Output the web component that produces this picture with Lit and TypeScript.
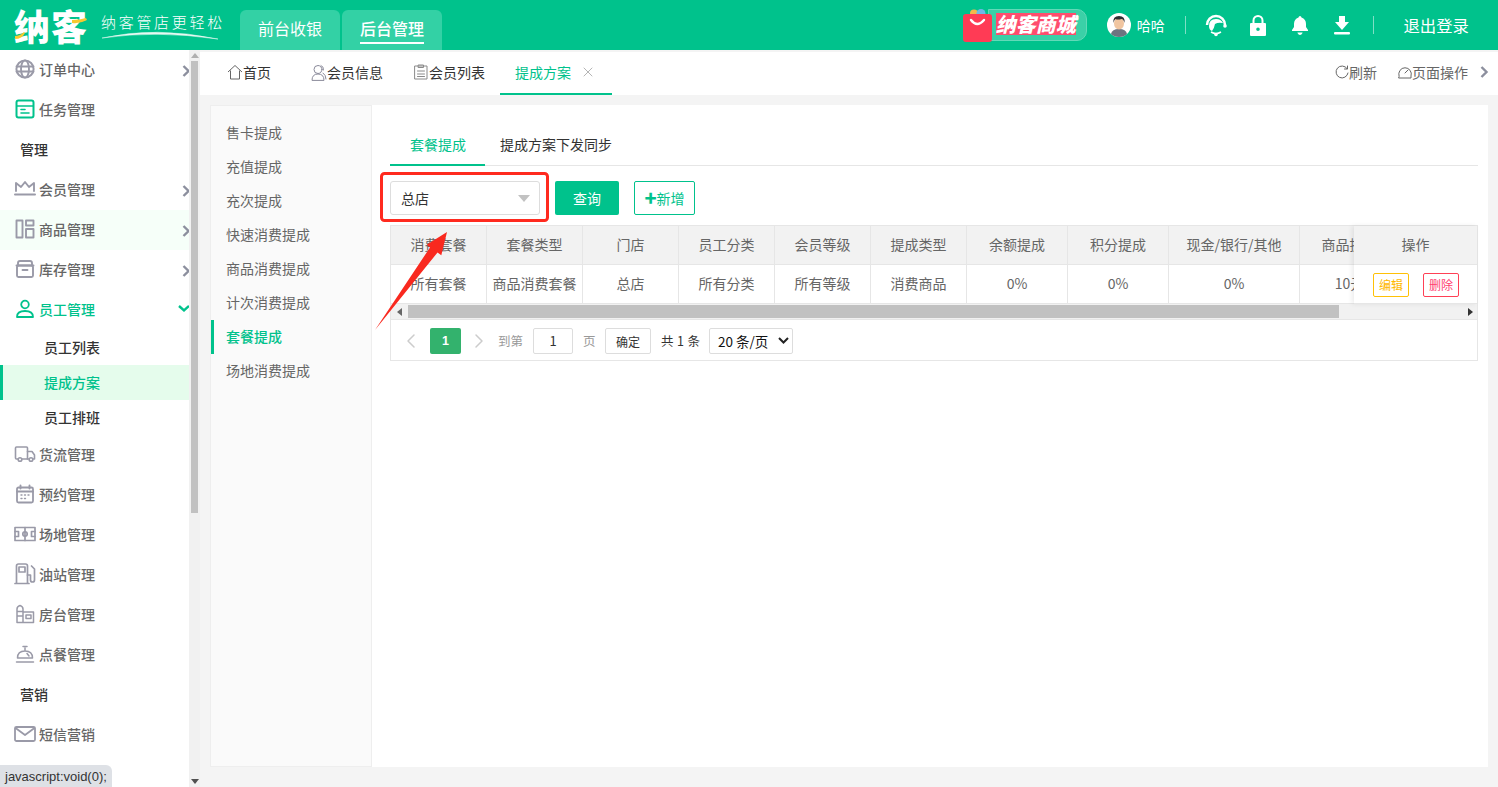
import { LitElement, html, css, svg, nothing } from "lit";
import { customElement } from "lit/decorators.js";

const S = (w: number, h: number, body: unknown, color = "#9a9aa8", sw = 1.9) => html`<svg width=${w} height=${h} viewBox="0 0 ${w} ${h}" fill="none" stroke=${color} stroke-width=${sw} stroke-linecap="round" stroke-linejoin="round">${body}</svg>`;

const G = "#00c28c";
const GC = css`#00c28c`;
const icons: Record<string, unknown> = {
  globe: S(20, 20, svg`<circle cx="10" cy="10" r="8.6" stroke-width="2"/><ellipse cx="10" cy="10" rx="4" ry="8.6"/><path d="M1.5 7.5h17M1.5 12.5h17"/>`),
  task: S(20, 20, svg`<rect x="1.5" y="1.5" width="17" height="17" rx="2" stroke-width="2"/><path d="M2 7h16M6 10.5h4M6 14h8" stroke-width="1.6"/>`, G),
  crown: S(22, 20, svg`<path d="M2 12V4l5 4 4-5 4 5 5-4v8" /><path d="M1 15.500h20" stroke-width="2"/>`),
  goods: S(20, 20, svg`<rect x="1.500" y="1.500" width="6" height="17"/><rect x="11" y="1.500" width="7.500" height="5"/><rect x="11" y="10" width="7.500" height="8.500"/>`),
  box: S(20, 20, svg`<path d="M3 6.500V4q0-2 2-2h10q2 0 2 2v2.500"/><path d="M1.500 6.500h17"/><rect x="2" y="6.500" width="16" height="11.500" rx="1.500"/><path d="M7.500 11h5"/>`),
  user: S(20, 20, svg`<circle cx="10" cy="5.500" r="3.800" stroke-width="1.800"/><path d="M2 18q0-6 8-6t8 6z" stroke-width="1.800"/>`, G),
  truck: S(22, 20, svg`<path d="M4 15H2.500q-1 0-1-1V4q0-1 1-1h10q1 0 1 1v11H8"/><path d="M13.500 7.500H18l2.500 3.500v4H19"/><path d="M13.500 15H15"/><circle cx="6" cy="15.500" r="1.800"/><circle cx="17" cy="15.500" r="1.800"/>`, "#9a9aa8", 1.6),
  cal: S(20, 20, svg`<rect x="2" y="3.500" width="16" height="15" rx="1.500" stroke-width="1.800"/><path d="M2 7.500h16M5.500 1.500v3M14.500 1.500v3"/><path d="M6 11h1M9.500 11h1M13 11h1M6 14.500h1M9.500 14.500h1" stroke-width="1.400"/>`),
  field: S(22, 16, svg`<rect x="1" y="1.500" width="20" height="13"/><path d="M1 5.500h3.500v5H1M21 5.500h-3.500v5H21M11 1.500v13"/><circle cx="11" cy="8" r="2.200"/>`, "#9a9aa8", 1.7),
  fuel: S(22, 22, svg`<path d="M2.500 20V3q0-2 2-2h7q2 0 2 2v17M1 20.500h14"/><rect x="5" y="4" width="6" height="5"/><path d="M13.500 12h3v5q0 2 2 2t2-2V6l-3-3"/>`, "#9a9aa8", 1.7),
  room: S(20, 20, svg`<path d="M2 18.500V5q0-2.500 3-3.500 3 1 3 3.500v13.500zM2 7.500h6M2 12h6M8 8h10.500v10.500H8"/><rect x="11" y="11" width="5" height="3.500"/>`, "#9a9aa8", 1.5),
  bell2: S(20, 20, svg`<path d="M2.500 14q0-7 7.500-7t7.500 7zM10 7V4M8 2.500h4M1.500 18h17" /><path d="M12 9.500l2 2.500"/>`, "#9a9aa8", 1.5),
  mail: S(22, 18, svg`<rect x="1" y="2" width="20" height="14" rx="1.500" stroke-width="1.800"/><path d="M1.500 3l9.500 7 9.500-7" stroke-width="1.800"/>`),
};

const chevron = html`<svg class="chev" width="9" height="14" viewBox="0 0 9 14" fill="none" stroke="#8c8f9e" stroke-width="2.400"><path d="M1.500 2l5 5-5 5"/></svg>`;
const chevDown = html`<svg class="chev" width="12" height="9" viewBox="0 0 12 9" fill="none" stroke="${G}" stroke-width="2.400"><path d="M1 2l5 4.500L11 2"/></svg>`;

type Item = { t: string; i?: string; c?: boolean; kind?: string };
const menu: Item[] = [
  { t: "订单中心", i: "globe", c: true },
  { t: "任务管理", i: "task" },
  { t: "管理", kind: "head" },
  { t: "会员管理", i: "crown", c: true },
  { t: "商品管理", i: "goods", c: true, kind: "hover" },
  { t: "库存管理", i: "box", c: true },
  { t: "员工管理", i: "user", kind: "open" },
  { t: "员工列表", kind: "sub" },
  { t: "提成方案", kind: "sub on" },
  { t: "员工排班", kind: "sub" },
  { t: "货流管理", i: "truck" },
  { t: "预约管理", i: "cal" },
  { t: "场地管理", i: "field" },
  { t: "油站管理", i: "fuel" },
  { t: "房台管理", i: "room" },
  { t: "点餐管理", i: "bell2" },
  { t: "营销", kind: "head" },
  { t: "短信营销", i: "mail" },
];

const side = ["售卡提成", "充值提成", "充次提成", "快速消费提成", "商品消费提成", "计次消费提成", "套餐提成", "场地消费提成"];
const cols: [string, string, number][] = [
  ["消费套餐", "所有套餐", 96], ["套餐类型", "商品消费套餐", 96], ["门店", "总店", 96], ["员工分类", "所有分类", 96],
  ["会员等级", "所有等级", 96], ["提成类型", "消费商品", 96], ["余额提成", "0%", 101], ["积分提成", "0%", 101],
  ["现金/银行/其他", "0%", 131], ["商品提成", "10元", 100],
];

@customElement("app-root")
export class AppRoot extends LitElement {
  static styles = css`
    :host { display: block; width: 100vw; height: 100vh; overflow: hidden; position: relative; background: #f4f4f4;
      font-family: "Noto Sans CJK SC", "Liberation Sans", sans-serif; font-size: 14px; color: #333; }
    * { box-sizing: border-box; }
    svg { display: block; flex: none; }
    .top { height: 50px; background: ${GC}; display: flex; color: #fff; }
    .brand { width: 240px; display: flex; align-items: center; padding-left: 14px; flex: none; }
    .logo { font-size: 36px; font-weight: 900; letter-spacing: 1px; line-height: 1; width: 74px; white-space: nowrap; position: relative; }
    .accent { position: absolute; left: 0; top: 0; }
    .slogan { margin-left: 13px; position: relative; font-size: 15px; font-weight: 300; letter-spacing: 2.700px; line-height: 20px; white-space: nowrap; height: 34px; padding-top: 4px; }
    .swoosh { position: absolute; left: 0; top: 20px; }
    .navtab { width: 100px; height: 40px; margin: 10px 2px 0 0; background: #33d1a5; border-radius: 6px 6px 0 0; display: flex; justify-content: center; align-items: center; font-size: 16px; }
    .navtab span { display: block; line-height: 28px; height: 30px; margin-top: -2px; }
    .navtab.on span { border-bottom: 2px solid #fff; font-weight: 500; }
    .topright { margin-left: auto; display: flex; align-items: center; padding-right: 29px; }
    .shop { display: flex; align-items: center; width: 124px; height: 34px; position: relative; margin-right: 20px; }
    .pill { position: absolute; left: 25px; right: 0; top: 1px; height: 32px; border-radius: 0 10px 10px 0; background: #3bd0a7; border: 1px solid #62d9b8; }
    .bag { position: absolute; left: 0; top: 1px; }
    .shoptext { position: absolute; left: 33px; top: 5px; font-size: 20px; line-height: 24px; font-weight: 900; font-style: italic; color: #fff; background: #ff4d6d; white-space: nowrap; letter-spacing: 0; padding: 0; height: 22px; display: flex; align-items: center; }
    .who { font-size: 14px; margin-left: 6px; width: 29px; }
    .vsep { width: 1px; height: 18px; background: #7fdfc5; }
    .ti { width: 42px; display: flex; justify-content: center; }
    .logout { font-size: 16.400px; margin-left: 29.600px; }
    .body { display: flex; height: 737px; }
    .sidebar { width: 189px; flex: none; background: #fff; overflow: hidden; }
    .mi { height: 40px; display: flex; align-items: center; position: relative; padding: 0 0 2px 15px; color: #666; font-weight: 500; }
    .mi .ic { width: 20px; display: flex; justify-content: center; margin-right: 4px; }
    .mi .tx { line-height: 20px; }
    .mi .chev { position: absolute; right: -2px; top: 14px; }
    .mi.hover { background: #f6fff9; }
    .mi.open { color: ${GC}; }
    .mi.open .chev { top: 14px; right: -1px; }
    .mi.head { color: #333; padding-left: 20px; }
    .mi.sub { height: 35px; padding-left: 44px; color: #333; }
    .mi.sub.on { background: #e5fcec; color: ${GC}; border-left: 3px solid ${GC}; padding-left: 41px; }
    .sb { width: 11px; flex: none; background: #f1f1f1; display: flex; flex-direction: column; align-items: center; }
    .sb .arr { height: 11px; flex: none; display: flex; align-items: center; justify-content: center; }
    .sb .thumb { width: 7px; height: 452px; background: #c1c1c1; flex: none; }
    .sb .sp { flex: 1; }
    .main { flex: 1; min-width: 0; display: flex; flex-direction: column; }
    .tabs { margin-top: 2px; height: 43px; background: #fff; display: flex; align-items: center; padding: 0 0 3px 27px; flex: none; }
    .tab { display: flex; align-items: center; color: #333; line-height: 20px; }
    .tab.t2 { margin-left: 40px; }
    .tab.t3 { margin-left: 31px; }
    .tab.t3 svg { margin-right: 1px; }
    .tab.cur { margin-left: 15px; width: 112px; height: 43px; padding: 0 0 2px 15px; color: ${GC}; border-bottom: 2px solid ${GC}; align-self: flex-start; }
    .tab.cur .x { margin-left: 12px; }
    .tabr { margin-left: auto; display: flex; align-items: center; color: #666; }
    .tabr .a { display: flex; align-items: center; }
    .tabr .b { display: flex; align-items: center; margin-left: 21px; }
    .tabr .chev { margin: 0 9px 0 12px; }
    .content { flex: 1; margin: 10px 10px 20px; display: flex; background: #fff; min-height: 0; }
    .left { width: 162px; flex: none; background: #fafafa; border: 1px solid #eee; padding-top: 10px; }
    .left div { height: 34px; line-height: 32px; padding-left: 15px; color: #666; }
    .left div.on { color: ${GC}; border-left: 3px solid ${GC}; padding-left: 12px; font-weight: 500; }
    .right { flex: 1; min-width: 0; padding: 20px 10px 0 18px; }
    .it { display: flex; height: 41px; border-bottom: 1px solid #e6e6e6; }
    .it div { height: 41px; line-height: 38px; padding: 0 20px 0 15px; color: #333; }
    .it div.on { width: 95px; padding: 0 0 0 20px; color: ${GC}; border-bottom: 2px solid ${GC}; }
    .it div.o2 { padding-left: 15px; font-weight: 400; }
    .bar { display: flex; margin-top: 15px; height: 34px; }
    .sel { width: 150px; border: 1px solid #ddd; border-radius: 3px; display: flex; align-items: center; justify-content: space-between; padding: 0 9px 0 10px; color: #333; }
    .tri { width: 0; height: 0; border-left: 6px solid transparent; border-right: 6px solid transparent; border-top: 7px solid #c2c2c2; }
    .q { margin-left: 15px; width: 64px; background: ${GC}; color: #fff; border-radius: 2px; display: flex; align-items: center; justify-content: center; }
    .n { margin-left: 15px; width: 61px; border: 1px solid ${GC}; color: ${GC}; border-radius: 2px; display: flex; align-items: center; justify-content: center; }
    .n b { font-size: 20px; line-height: 18px; font-weight: 900; }
    .tw { margin-top: 10px; border: 1px solid #e6e6e6; position: relative; height: 136px; width: 1088px; }
    .clip { overflow: hidden; height: 78px; }
    table { border-collapse: separate; border-spacing: 0; table-layout: fixed; width: 1009px; }
    th, td { height: 39px; border-right: 1px solid #e6e6e6; border-bottom: 1px solid #e6e6e6; padding: 0 0 2px; text-align: center; font-weight: 400; color: #666; white-space: nowrap; overflow: hidden; }
    th { background: #f2f2f2; }
    .fix { position: absolute; top: 0; right: 0; width: 123px; height: 78px; background: #fff; box-shadow: -2px 0 5px rgba(0,0,0,.08); }
    .fh { height: 39px; background: #f2f2f2; border-bottom: 1px solid #e6e6e6; text-align: center; line-height: 36px; color: #666; }
    .fb { height: 39px; display: flex; justify-content: center; align-items: center; gap: 14px; padding-top: 2px; padding-left: 1px; border-bottom: 1px solid #e6e6e6; }
    .mini { width: 36px; height: 24px; line-height: 22px; text-align: center; font-size: 12px; border-radius: 2px; border: 1px solid; background: #fff; }
    .mini.e { border-color: #ffc107; color: #ffb800; }
    .mini.d { border-color: #ff4055; color: #ff4070; }
    .hs { height: 16px; background: #f1f1f1; display: flex; align-items: center; border-bottom: 1px solid #e6e6e6; }
    .hs .la { width: 17px; display: flex; justify-content: center; margin-right: 0; }
    .hs .th { width: 931px; height: 13px; background: #c1c1c1; }
    .hs .ra { margin-left: auto; margin-right: 4px; }
    .pg { height: 40px; display: flex; align-items: center; color: #999; font-size: 12.500px; padding-top: 1px; }
    .pg .c { display: flex; justify-content: center; }
    .pg .cur { width: 31px; height: 26px; background: #33b26d; color: #fff; border-radius: 2px; line-height: 26px; text-align: center; font-weight: 700; font-family: "Liberation Sans", sans-serif; }
    .pg .inp { width: 40px; height: 26px; margin: 0 10px; border: 1px solid #ddd; border-radius: 2px; display: flex; align-items: center; justify-content: center; color: #333; font-size: 13px; }
    .pg .ok { width: 46px; height: 26px; margin-left: 9.500px; border: 1px solid #ddd; border-radius: 2px; display: flex; align-items: center; justify-content: center; color: #333; font-size: 12px; padding-top: 2px; }
    .pg .tot { margin-left: 10px; color: #333; width: 39px; letter-spacing: .35px; white-space: nowrap; }
    .pg .ps { margin-left: 9px; width: 84px; height: 26px; border: 1px solid #ddd; border-radius: 2px; display: flex; align-items: center; justify-content: space-between; padding: 0 3px 0 8px; color: #111; font-size: 13.500px; }
    .status { position: absolute; left: 0; bottom: 0; width: 112px; height: 22px; background: #dee1e6; border-radius: 0 6px 0 0; font: 13px/23px "Liberation Sans", sans-serif; color: #333; padding-left: 5px; }
    .over { position: absolute; left: 0; top: 0; pointer-events: none; }
  `;

  render() {
    return html`
      <div class="top">
        <div class="brand">
          <div class="logo">纳客
            <svg class="accent" width="74" height="36" viewBox="0 0 74 36"><path d="M1 29q5 0 9-4l1 1q-3 6-10 6z" fill="#f8c92f"/><path d="M58 13q8 0 14-2l1 2q-7 4-15 3z" fill="#f8c92f"/></svg>
          </div>
          <div class="slogan">纳客管店更轻松
            <svg class="swoosh" width="118" height="14" viewBox="0 0 118 14" fill="none"><path d="M1 10Q55 -2 117 11Q55 2 1 10z" fill="#e7f9f2" stroke="#e7f9f2" stroke-width=".5"/></svg>
          </div>
        </div>
        <div class="navtab"><span>前台收银</span></div>
        <div class="navtab on"><span>后台管理</span></div>
        <div class="topright">
          <div class="shop">
            <div class="pill"></div>
            <svg class="bag" width="30" height="33" viewBox="0 0 30 33" fill="none">
              <circle cx="11" cy="4.500" r="4" fill="#f5b84a"/><circle cx="18" cy="4.500" r="4.500" fill="#6fb7e8"/>
              <rect x="0" y="5" width="29" height="28" rx="3" fill="#ff3b55"/>
              <path d="M8 11q6 8 13 0" stroke="#fff" stroke-width="2.400" stroke-linecap="round"/>
            </svg>
            <div class="shoptext">纳客商城</div>
          </div>
          <svg width="24" height="24" viewBox="0 0 24 24"><circle cx="12" cy="12" r="12" fill="#fff"/><path d="M4 21q1-5 8-5t8 5q-3 3-8 3t-8-3z" fill="#6d7480"/><ellipse cx="12" cy="10.500" rx="5" ry="6" fill="#f0c5a0"/><path d="M6.500 10q-1-7 5.500-7t5.500 7q-1-4-3-4-4 1-6 0-1.500 1-2 4z" fill="#2f2f33"/></svg>
          <div class="who">哈哈</div>
          <div class="vsep" style="margin-left:19px"></div>
          <div class="ti" style="margin-left:9px"><svg width="22" height="24" viewBox="0 0 22 24" fill="none"><path d="M2 12a9 9 0 0 1 18 0" stroke="#fff" stroke-width="2.500"/><path d="M4 13q0-7 7-7 5 0 7 4-5-1-8 1-1 5-3 7-3-1-3-5z" fill="#fff"/><path d="M6 19q5 3 10 0" stroke="#fff" stroke-width="1.500"/><circle cx="11" cy="21.500" r="1.800" fill="#fff"/><circle cx="20" cy="13" r="1.800" fill="#fff"/></svg></div>
          <div class="ti"><svg width="16" height="21" viewBox="0 0 16 21"><path d="M3.500 9V5.500a4.500 4.500 0 0 1 9 0V9" fill="none" stroke="#fff" stroke-width="2"/><path fill-rule="evenodd" d="M1 8h14a1 1 0 0 1 1 1v11a1 1 0 0 1-1 1H1a1 1 0 0 1-1-1V9a1 1 0 0 1 1-1zm7 4.500a1.800 1.800 0 1 0 0 3.600 1.800 1.800 0 0 0 0-3.600z" fill="#fff"/></svg></div>
          <div class="ti"><svg width="16" height="19" viewBox="0 0 16 19"><path d="M8 0q1.300 0 1.500 1.500Q14 3 14 8v3l2 3v1H0v-1l2-3V8q0-5 4.500-6.500Q6.700 0 8 0z" fill="#fff"/><path d="M5.500 16.500h5v.5q-1 2-2.500 2t-2.500-2z" fill="#fff"/></svg></div>
          <div class="ti"><svg width="16" height="19" viewBox="0 0 16 19"><path d="M5 0h6v6h4l-7 8-7-8h4z" fill="#fff"/><rect x="0" y="16" width="16" height="2.500" rx="1" fill="#fff"/></svg></div>
          <div class="vsep" style="margin-left:10px"></div>
          <div class="logout">退出登录</div>
        </div>
      </div>
      <div class="body">
        <div class="sidebar">
          ${menu.map(m => html`<div class="mi ${m.kind ?? ""}">
            ${m.i ? html`<span class="ic">${icons[m.i]}</span>` : nothing}
            <span class="tx">${m.t}</span>
            ${m.c ? chevron : nothing}${m.kind === "open" ? chevDown : nothing}
          </div>`)}
        </div>
        <div class="sb">
          <div class="arr"><svg width="8" height="5" viewBox="0 0 8 5"><path d="M4 0l4 5H0z" fill="#b0b0b0"/></svg></div>
          <div class="thumb"></div>
          <div class="sp"></div>
          <div class="arr"><svg width="8" height="5" viewBox="0 0 8 5"><path d="M4 5l4-5H0z" fill="#505050"/></svg></div>
        </div>
        <div class="main">
          <div class="tabs">
            <div class="tab">${S(16, 16, svg`<path d="M1 8l7-6.500L15 8M3.500 6.500V15h9V6.500" stroke-linecap="butt"/>`, "#666", 1)}<span>首页</span></div>
            <div class="tab t2">${S(16, 17, svg`<circle cx="7" cy="5.500" r="4"/><path d="M1 16q0-6 6-6t6 6zM10 1.500q3 1 2.500 4.500M12 9q3 2 3 6"/>`, "#8a8a9a", 1)}<span>会员信息</span></div>
            <div class="tab t3">${S(14, 16, svg`<rect x="1" y="2" width="12" height="13"/><path d="M4.500 1h5v2.500h-5zM3.500 7h7M3.500 10h7M3.500 12.500h7"/>`, "#8a8a8a", 1)}<span>会员列表</span></div>
            <div class="tab cur"><span>提成方案</span><span class="x">${S(10, 10, svg`<path d="M1 1l8 8M9 1l-8 8"/>`, "#b5b5b5", 1)}</span></div>
            <div class="tabr">
              <div class="a">${S(14, 14, svg`<path d="M12 3.500A6 6 0 1 0 13 8M12.500 1v3h-3"/>`, "#666", 1)}<span>刷新</span></div>
              <div class="b">${S(14, 14, svg`<path d="M1 11a6.300 6.300 0 1 1 12 0v2H1zM7 8l3-3"/>`, "#666", 1)}<span>页面操作</span></div>
              ${chevron}
            </div>
          </div>
          <div class="content">
            <div class="left">${side.map(s => html`<div class=${s === "套餐提成" ? "on" : ""}>${s}</div>`)}</div>
            <div class="right">
              <div class="it"><div class="on">套餐提成</div><div class="o2">提成方案下发同步</div></div>
              <div class="bar">
                <div class="sel"><span>总店</span><i class="tri"></i></div>
                <div class="q">查询</div>
                <div class="n"><b>+</b>新增</div>
              </div>
              <div class="tw">
                <div class="clip">
                  <table>
                    <colgroup>${cols.map(c => html`<col style="width:${c[2]}px">`)}</colgroup>
                    <tr>${cols.map(c => html`<th>${c[0]}</th>`)}</tr>
                    <tr>${cols.map(c => html`<td>${c[1]}</td>`)}</tr>
                  </table>
                </div>
                <div class="fix">
                  <div class="fh">操作</div>
                  <div class="fb"><span class="mini e">编辑</span><span class="mini d">删除</span></div>
                </div>
                <div class="hs">
                  <div class="la"><svg width="5" height="8" viewBox="0 0 5 8"><path d="M0 4l5-4v8z" fill="#666"/></svg></div>
                  <div class="th"></div>
                  <svg class="ra" width="5" height="8" viewBox="0 0 5 8"><path d="M5 4L0 0v8z" fill="#333"/></svg>
                </div>
                <div class="pg">
                  <div class="c" style="width:39px">${S(10, 16, svg`<path d="M8 2L2 8l6 6"/>`, "#ccc", 1.500)}</div>
                  <div class="cur">1</div>
                  <div class="c" style="width:35px">${S(10, 16, svg`<path d="M2 2l6 6-6 6"/>`, "#ccc", 1.500)}</div>
                  <span style="margin-left:2px">到第</span>
                  <div class="inp">1</div>
                  <span>页</span>
                  <div class="ok">确定</div>
                  <span class="tot">共 1 条</span>
                  <div class="ps"><span>20 条/页</span><svg width="11" height="7" viewBox="0 0 11 7" fill="none" stroke="#222" stroke-width="2"><path d="M1 1l4.500 4.500L10 1"/></svg></div>
                </div>
              </div>
            </div>
          </div>
        </div>
      </div>
      <div class="status">javascript:void(0);</div>
      <svg class="over" width="1498" height="787" viewBox="0 0 1498 787">
        <rect x="381.500" y="173.500" width="166" height="47" rx="3" fill="none" stroke="#ff2a1f" stroke-width="3"/>
        <polygon points="375,330 430,247.500 426.700,244.700 447,232 441.300,255.300 437.500,252.500" fill="#f9291f"/>
      </svg>
    `;
  }
}
